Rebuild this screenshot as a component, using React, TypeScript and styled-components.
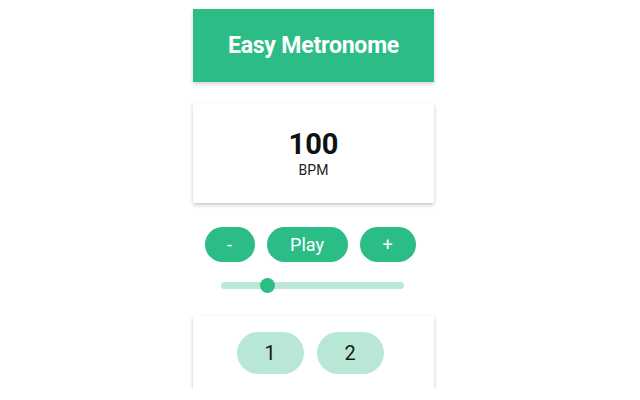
import React, { useState } from "react";
import styled, { createGlobalStyle } from "styled-components";

const GlobalStyle = createGlobalStyle`
  html, body {
    margin: 0;
    padding: 0;
    background: #ffffff;
    font-family: Roboto, "Liberation Sans", Arial, sans-serif;
  }
`;

const Page = styled.div`
  width: 241px;
  margin-left: 193px;
  padding-top: 9px;
  display: flex;
  flex-direction: column;
`;

const Header = styled.div`
  height: 73px;
  background: #2cbd87;
  color: #ffffff;
  display: flex;
  justify-content: center;
  align-items: center;
  font-size: 23px;
  font-weight: 700;
  letter-spacing: -0.2px;
  box-shadow: 0 2px 4px rgba(0, 0, 0, 0.18);
`;

const Card = styled.div<{ $h: number; $mt: number }>`
  height: ${({ $h }) => $h}px;
  margin-top: ${({ $mt }) => $mt}px;
  background: #ffffff;
  box-shadow: 0 2px 4px rgba(0, 0, 0, 0.22);
  display: flex;
  flex-direction: column;
  justify-content: center;
  align-items: center;
`;

const Bpm = styled.div`
  font-size: 29px;
  font-weight: 700;
  color: #111;
  line-height: 32px;
`;

const Unit = styled.div`
  font-size: 14px;
  color: #222;
  margin-top: 2px;
`;

const Controls = styled.div`
  margin-top: 24px;
  display: flex;
  justify-content: center;
  gap: 12px;
  padding-right: 7px;
`;

const Pill = styled.button<{ $w: number }>`
  width: ${({ $w }) => $w}px;
  height: 35px;
  border: none;
  border-radius: 18px;
  background: #2cbd87;
  color: #ffffff;
  font-family: inherit;
  font-size: 18px;
  padding: 0;
  cursor: pointer;
`;

const Slider = styled.input`
  -webkit-appearance: none;
  appearance: none;
  display: block;
  width: 183px;
  height: 7px;
  margin: 20px 0 0 28px;
  border-radius: 4px;
  background: #bde8d6;
  outline: none;

  &::-webkit-slider-thumb {
    -webkit-appearance: none;
    appearance: none;
    width: 15px;
    height: 15px;
    border-radius: 50%;
    background: #2cbd87;
    border: none;
  }
`;

const Beats = styled.div`
  display: flex;
  gap: 13px;
  padding-right: 7px;
`;

const Beat = styled.button`
  width: 67px;
  height: 42px;
  border: none;
  border-radius: 21px;
  background: #b8e8d5;
  color: #1a1a1a;
  font-family: inherit;
  font-size: 20px;
  padding: 0;
`;

export default function App() {
  const [bpm, setBpm] = useState(100);
  return (
    <>
      <GlobalStyle />
      <Page>
        <Header>Easy Metronome</Header>
        <Card $h={100} $mt={21}>
          <Bpm>{bpm}</Bpm>
          <Unit>BPM</Unit>
        </Card>
        <Controls>
          <Pill $w={50} onClick={() => setBpm(bpm - 1)}>-</Pill>
          <Pill $w={81}>Play</Pill>
          <Pill $w={56} onClick={() => setBpm(bpm + 1)}>+</Pill>
        </Controls>
        <Slider
          type="range"
          min={40}
          max={300}
          value={bpm}
          onChange={(e) => setBpm(Number(e.target.value))}
        />
        <Card $h={73} $mt={27}>
          <Beats>
            <Beat>1</Beat>
            <Beat>2</Beat>
          </Beats>
        </Card>
      </Page>
    </>
  );
}
